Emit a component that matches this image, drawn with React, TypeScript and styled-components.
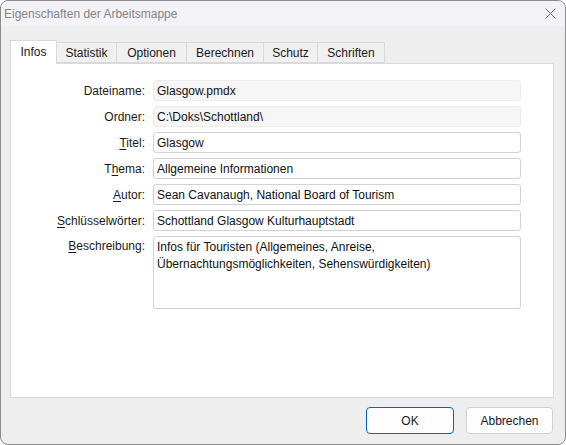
import React from "react";
import styled, { createGlobalStyle } from "styled-components";

const Global = createGlobalStyle`
  html, body { margin: 0; padding: 0; background: #ffffff; }
  body { font-family: "Segoe UI", "Liberation Sans", Arial, sans-serif; font-size: 12px; color: #1a1a1a; }
  * { box-sizing: border-box; }
`;

const Window = styled.div`
  width: 566px;
  height: 445px;
  border: 1px solid #8a8a8a;
  border-radius: 8px;
  overflow: hidden;
  background: #eeeeee;
  display: flex;
  flex-direction: column;
`;

const TitleBar = styled.div`
  height: 25px;
  flex: none;
  background: #f2f2f7;
  display: flex;
  align-items: center;
  justify-content: space-between;
  padding: 0 9px 0 3px;
`;

const Title = styled.span`
  color: #858585;
  font-size: 12px;
`;

const CloseButton = styled.span`
  display: flex;
  align-items: center;
  justify-content: center;
  width: 11px;
  height: 11px;
`;

const Body = styled.div`
  flex: 1;
  display: flex;
  flex-direction: column;
  padding: 14px 11px 0 9px;
`;

const TabRow = styled.div`
  display: flex;
  align-items: flex-end;
  height: 23px;
  position: relative;
  z-index: 1;
`;

const Tab = styled.div<{ $active?: boolean; $w: number }>`
  width: ${(p) => p.$w}px;
  height: ${(p) => (p.$active ? 24 : 21)}px;
  margin-bottom: ${(p) => (p.$active ? -1 : 0)}px;
  margin-left: -1px;
  background: ${(p) => (p.$active ? "#ffffff" : "#f0f0f0")};
  border: 1px solid #d9d9d9;
  border-bottom: ${(p) => (p.$active ? "none" : "1px solid #d9d9d9")};
  display: flex;
  align-items: ${(p) => (p.$active ? "flex-start" : "center")};
  padding-top: ${(p) => (p.$active ? 4 : 0)}px;
  justify-content: center;
  font-size: 12px;
  color: #1a1a1a;
  &:first-child { margin-left: 0; }
`;

const Panel = styled.div`
  height: 335px;
  background: #ffffff;
  border: 1px solid #d9d9d9;
  padding: 16px 0 0 0;
`;

const Form = styled.div`
  display: grid;
  grid-template-columns: 134px 368px;
  column-gap: 8px;
  row-gap: 5px;
`;

const Label = styled.label<{ $top?: boolean }>`
  display: flex;
  justify-content: flex-end;
  align-items: ${(p) => (p.$top ? "flex-start" : "center")};
  padding-top: ${(p) => (p.$top ? 3 : 0)}px;
  font-size: 12px;
  color: #1a1a1a;
  white-space: nowrap;
  u { text-decoration-thickness: 1px; text-underline-offset: 2px; }
`;

const Field = styled.div<{ $readOnly?: boolean; $tall?: boolean }>`
  height: ${(p) => (p.$tall ? 73 : 21)}px;
  border: 1px solid ${(p) => (p.$readOnly ? "#ececec" : "#d2d2d2")};
  background: ${(p) => (p.$readOnly ? "#f6f6f6" : "#ffffff")};
  border-radius: 3px;
  padding: ${(p) => (p.$tall ? "2px 3px" : "0 3px")};
  display: flex;
  align-items: ${(p) => (p.$tall ? "flex-start" : "center")};
  font-size: 12px;
  color: #111111;
  line-height: ${(p) => (p.$tall ? "17px" : "normal")};
  white-space: nowrap;
  overflow: hidden;
`;

const Footer = styled.div`
  display: flex;
  justify-content: flex-end;
  gap: 12px;
  padding: 9px 0 0 0;
  margin-right: 1px;
`;

const Button = styled.button<{ $primary?: boolean; $w: number }>`
  width: ${(p) => p.$w}px;
  height: 27px;
  font-family: inherit;
  font-size: 12px;
  color: #1a1a1a;
  background: #fdfdfd;
  border: 1px solid ${(p) => (p.$primary ? "#0067c0" : "#d0d0d0")};
  border-radius: 4px;
  padding: 0;
`;

const tabs = [
  { label: "Infos", w: 47, active: true },
  { label: "Statistik", w: 61 },
  { label: "Optionen", w: 71 },
  { label: "Berechnen", w: 78 },
  { label: "Schutz", w: 55 },
  { label: "Schriften", w: 68 },
];

export default function App() {
  return (
    <>
      <Global />
      <Window>
        <TitleBar>
          <Title>Eigenschaften der Arbeitsmappe</Title>
          <CloseButton>
            <svg width="11" height="11" viewBox="0 0 11 11">
              <path d="M0.5 0.5 L10.5 10.5 M10.5 0.5 L0.5 10.5" stroke="#707070" strokeWidth="1" fill="none" />
            </svg>
          </CloseButton>
        </TitleBar>
        <Body>
          <TabRow>
            {tabs.map((t) => (
              <Tab key={t.label} $active={t.active} $w={t.w}>
                {t.label}
              </Tab>
            ))}
          </TabRow>
          <Panel>
            <Form>
              <Label>Dateiname:</Label>
              <Field $readOnly>Glasgow.pmdx</Field>
              <Label>Ordner:</Label>
              <Field $readOnly>C:\Doks\Schottland\</Field>
              <Label>
                <span><u>T</u>itel:</span>
              </Label>
              <Field>Glasgow</Field>
              <Label>
                <span>T<u>h</u>ema:</span>
              </Label>
              <Field>Allgemeine Informationen</Field>
              <Label>
                <span><u>A</u>utor:</span>
              </Label>
              <Field>Sean Cavanaugh, National Board of Tourism</Field>
              <Label>
                <span><u>S</u>chlüsselwörter:</span>
              </Label>
              <Field>Schottland Glasgow Kulturhauptstadt</Field>
              <Label $top>
                <span><u>B</u>eschreibung:</span>
              </Label>
              <Field $tall>
                <span>
                  Infos für Touristen (Allgemeines, Anreise,
                  <br />
                  Übernachtungsmöglichkeiten, Sehenswürdigkeiten)
                </span>
              </Field>
            </Form>
          </Panel>
          <Footer>
            <Button $primary $w={88}>OK</Button>
            <Button $w={87}>Abbrechen</Button>
          </Footer>
        </Body>
      </Window>
    </>
  );
}
